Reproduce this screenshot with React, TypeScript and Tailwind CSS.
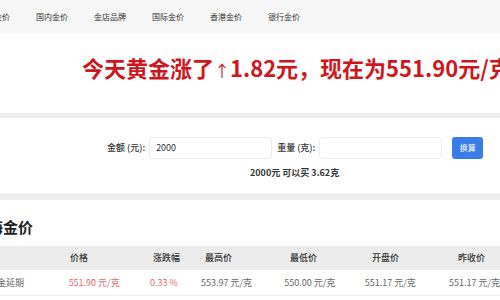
import React from "react";

const navItems = ["首页金价", "国内金价", "金店品牌", "国际金价", "香港金价", "银行金价"];

export default function App() {
  return (
    <div className="w-[500px] h-[300px] overflow-hidden bg-[#eeeeee] font-['Noto_Sans_CJK_SC','Noto_Sans',sans-serif]">
      {/* nav */}
      <div className="h-[33px] bg-[#f6f6f6] flex items-center gap-[28px] text-[8px] leading-[10px] text-[#333] whitespace-nowrap">
        {navItems.map((n, i) => (
          <span key={n} className={i === 0 ? "-ml-[22px] w-[30px]" : "w-[30px]"}>
            {n}
          </span>
        ))}
      </div>

      {/* headline */}
      <div className="h-[80px] bg-white pt-[22px] pl-[82px] whitespace-nowrap overflow-hidden">
        <span className="text-[22px] leading-[24px] font-bold text-[#d0161d]">
          今天黄金涨了<span className="font-normal text-[16px]">↑</span>1.82元，现在为551.90元/克
        </span>
      </div>

      {/* converter */}
      <div className="mt-[5px] h-[75px] bg-white pt-[19px]">
        <div className="flex items-center text-[9px] text-[#333]">
          <span className="ml-[107px] font-medium">金额 (元):</span>
          <div className="ml-[4px] w-[123px] h-[22px] border border-[#ececec] rounded-[3px] flex items-center pl-[6px] text-[9px] text-[#333]">
            2000
          </div>
          <span className="ml-[5px] font-medium">重量 (克):</span>
          <div className="ml-[4px] w-[123px] h-[22px] border border-[#ececec] rounded-[3px]" />
          <div className="ml-[10px] w-[31px] h-[22px] rounded-[3px] bg-[#3b7de6] text-white flex items-center justify-center text-[8px]">
            换算
          </div>
        </div>
        <div className="mt-[8px] pl-[250px] text-[9px] leading-[12px] font-bold text-[#333] whitespace-nowrap">
          2000元 可以买 3.62克
        </div>
      </div>

      {/* table */}
      <div className="mt-[7px] h-[100px] bg-white">
        <div className="h-[46px] pt-[8px] flex items-center">
          <span className="-ml-[27px] text-[15px] font-bold text-[#222] leading-[18px]">上海金价</span>
        </div>
        <div className="h-[24px] bg-[#ececec] flex items-center text-[9px] text-[#333] font-medium whitespace-nowrap">
          <span className="w-[70px]" />
          <span className="w-[83px]">价格</span>
          <span className="w-[52px]">涨跌幅</span>
          <span className="w-[85px]">最高价</span>
          <span className="w-[82px]">最低价</span>
          <span className="w-[86px]">开盘价</span>
          <span>昨收价</span>
        </div>
        <div className="h-[26px] flex items-center text-[9px] text-[#666] whitespace-nowrap border-b border-[#eeeeee]">
          <span className="w-[70px] overflow-hidden">
            <span className="block -ml-[12px]">黄金延期</span>
          </span>
          <span className="w-[83px] text-[#e26a6e]">551.90 元/克</span>
          <span className="w-[52px] text-[#e26a6e]">0.33 %</span>
          <span className="w-[85px]">553.97 元/克</span>
          <span className="w-[82px]">550.00 元/克</span>
          <span className="w-[86px]">551.17 元/克</span>
          <span>551.17 元/克</span>
        </div>
      </div>
    </div>
  );
}
